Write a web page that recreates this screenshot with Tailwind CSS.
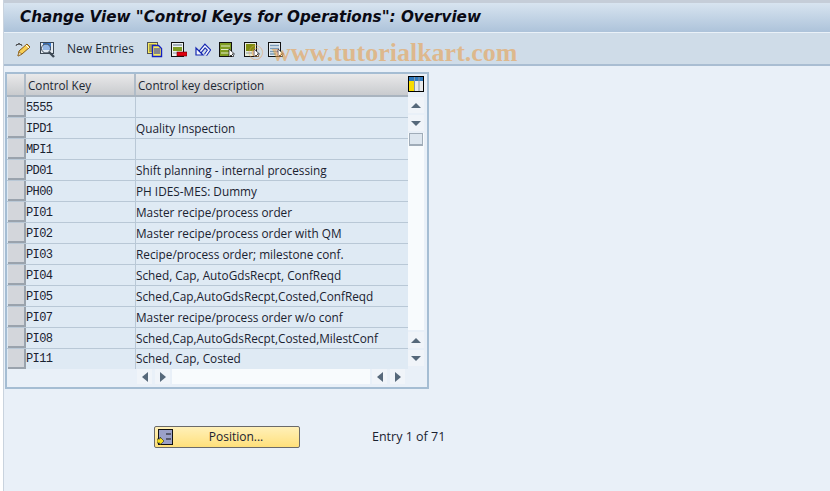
<!DOCTYPE html>
<html lang="en">
  <head>
    <meta charset="UTF-8" />
    <title>Change View</title>
    <script src="https://cdn.jsdelivr.net/npm/@tailwindcss/browser@4"></script>
  </head>
  <body class="w-[830px] h-[491px] overflow-hidden bg-white font-['Liberation_Sans',sans-serif]">
    <div class="h-[491px] ml-[3px] bg-[#e9f0f8] border-l border-[#c9d3de] flex flex-col relative">
      <div class="h-[3px] bg-[#c5cdd8]"></div>
      <div class="h-[30px] bg-gradient-to-b from-[#d8e4f0] to-[#adc3da] flex items-center pl-[16px] border-b border-[#eaf1f8]">
        <h1 class="font-['DejaVu_Sans',sans-serif] font-bold italic text-[15.2px] text-[#0a0a14]">Change View "Control Keys for Operations": Overview</h1>
      </div>
      <div class="h-[33px] bg-[#cfdce8] border-b-2 border-[#a9bdd2] flex items-center pl-[11px] pt-[1px]">
        <!-- pencil -->
        <svg width="17" height="17" viewBox="0 0 17 17" class="mr-[7px]"><path d="M1 5l1-2 1 1 1-2 1 2 1-1 1 2" fill="none" stroke="#444" stroke-width="1"/><path d="M3 15l1-5 8-7 3 3-8 7z" fill="#f7cf55" stroke="#8a5a10"/><path d="M11 4l3 3" stroke="#fff"/><path d="M3 15l1-4 3 2z" fill="#e8e0c8" stroke="#8a5a10" stroke-width=".6"/></svg>
        <!-- display -->
        <svg width="16" height="17" viewBox="0 0 16 17" class="mr-[12px]"><rect x="1.5" y="1.5" width="13" height="11" fill="#e4eaf0" stroke="#3c4854"/><rect x="4" y="2" width="8" height="7" fill="#3a7bd0"/><circle cx="7" cy="7.5" r="4.5" fill="#dce8f4" fill-opacity=".55" stroke="#3c4854"/><path d="M10 11l5 5" stroke="#3c4854" stroke-width="2.4"/></svg>
        <span class="font-['Open_Sans',sans-serif] text-[12px] text-[#1c2733] mr-[13px]">New Entries</span>
        <!-- copy -->
        <svg width="16" height="17" viewBox="0 0 16 17" class="mr-[8px]"><rect x=".5" y="1.5" width="10" height="11" fill="#f8ec5c" stroke="#555"/><path d="M2 4h7M2 6h7M2 8h7M2 10h4" stroke="#555"/><path d="M5.5 4.5h6l3 3v8h-9z" fill="#f8ec5c" stroke="#1420c0" stroke-width="1.4"/><path d="M7 8h6M7 10h6M7 12h6" stroke="#1420c0"/></svg>
        <!-- delete -->
        <svg width="16" height="17" viewBox="0 0 16 17" class="mr-[8px]"><rect x=".5" y="1.5" width="12" height="14" fill="#eef1f0" stroke="#111"/><path d="M2 4h9" stroke="#8a9aa8" stroke-width="1.5"/><rect x="2" y="6" width="9" height="4" fill="#7f9c22"/><path d="M2 12h5" stroke="#8a9aa8"/><rect x="6" y="11" width="10" height="4" fill="#e00010" stroke="#600" stroke-width=".6"/></svg>
        <!-- undo -->
        <svg width="16" height="17" viewBox="0 0 16 17" class="mr-[8px]"><path d="M5 11L10 5L14 9L10.500 14" fill="none" stroke="#1426b0" stroke-width="3.600"/><path d="M5 11L10 5L14 9L10.500 14" fill="none" stroke="#f4f7fc" stroke-width="1.500"/><path d="M1 14V7L8 14z" fill="#f4f7fc" stroke="#1426b0" stroke-width="1.200"/></svg>
        <!-- select all -->
        <svg width="16" height="17" viewBox="0 0 16 17" class="mr-[9px]"><rect x=".5" y="1.5" width="12" height="14" fill="#7f9c22" stroke="#111"/><path d="M2 5h9M2 8.500h9M2 12h9" stroke="#e4ecc8"/><path d="M10 8v8l2-2 2 2 1-1-2-2h2.500z" fill="#fff" stroke="#111" stroke-width=".7"/></svg>
        <!-- select block -->
        <svg width="16" height="17" viewBox="0 0 16 17" class="mr-[8px]"><rect x=".5" y="1.5" width="12" height="14" fill="#e8ecdc" stroke="#111"/><rect x="2" y="3" width="9" height="7" fill="#7f8c10"/><path d="M2 12h6" stroke="#8a9aa8"/><path d="M10 8v8l2-2 2 2 1-1-2-2h2.500z" fill="#fff" stroke="#111" stroke-width=".7"/></svg>
        <!-- deselect -->
        <svg width="16" height="17" viewBox="0 0 16 17"><rect x=".5" y="1.500" width="12" height="14" fill="#e6edf3" stroke="#111"/><path d="M2 4.500h9M2 7.500h9M2 10.500h9M2 13h6" stroke="#7a9ab8" stroke-width="1.300"/><path d="M10 8v8l2-2 2 2 1-1-2-2h2.500z" fill="#fff" stroke="#111" stroke-width=".7"/></svg>
      </div>

      <!-- watermark -->
      <div class="absolute left-[244px] top-[37px] flex items-center gap-[8px] font-['Liberation_Serif',serif] font-bold text-[26px] leading-[32px] text-[#e8a050]/60">
        <span class="font-normal text-[21px]">©</span>
        <span>www.tutorialkart.com</span>
      </div>

      <!-- table -->
      <div class="mt-[6px] ml-px w-[424px] h-[317px] border-2 border-[#a5bdd3] bg-[#e9f0f8] flex">
        <div class="w-[401px] flex flex-col">
          <div class="h-[21px] flex bg-gradient-to-b from-[#e9e9ea] to-[#c9cbce] text-[11.7px] font-['Open_Sans',sans-serif] text-[#1c2733]">
            <div class="w-[19px] border-r-2 border-[#b0bcc8]"></div>
            <div class="w-[110px] border-r-2 border-[#b0bcc8] pl-[2px] leading-[23px]">Control Key</div>
            <div class="flex-1 pl-[2px] leading-[23px]">Control key description</div>
          </div>
          <div class="border-t-2 border-[#a9b4bf] font-['Open_Sans',sans-serif] text-[11.8px] leading-[21px] text-[#1a2230]">
            <div class="h-[21px] flex bg-[#dfeaf4] border-b border-[#b9c8d6]"><div class="w-[18px] ml-px bg-[#d3d6db] border-r-2 border-b-2 border-[#9aa3ad]"></div><div class="w-[110px] pt-px border-r border-[#b9c8d6] font-['Liberation_Mono',monospace] text-[12px] tracking-[-0.6px]">5555</div><div class="flex-1"></div></div>
            <div class="h-[21px] flex bg-[#dfeaf4] border-b border-[#b9c8d6]"><div class="w-[18px] ml-px bg-[#d3d6db] border-r-2 border-b-2 border-[#9aa3ad]"></div><div class="w-[110px] pt-px border-r border-[#b9c8d6] font-['Liberation_Mono',monospace] text-[12px] tracking-[-0.6px]">IPD1</div><div class="flex-1">Quality Inspection</div></div>
            <div class="h-[21px] flex bg-[#dfeaf4] border-b border-[#b9c8d6]"><div class="w-[18px] ml-px bg-[#d3d6db] border-r-2 border-b-2 border-[#9aa3ad]"></div><div class="w-[110px] pt-px border-r border-[#b9c8d6] font-['Liberation_Mono',monospace] text-[12px] tracking-[-0.6px]">MPI1</div><div class="flex-1"></div></div>
            <div class="h-[21px] flex bg-[#dfeaf4] border-b border-[#b9c8d6]"><div class="w-[18px] ml-px bg-[#d3d6db] border-r-2 border-b-2 border-[#9aa3ad]"></div><div class="w-[110px] pt-px border-r border-[#b9c8d6] font-['Liberation_Mono',monospace] text-[12px] tracking-[-0.6px]">PD01</div><div class="flex-1">Shift planning - internal processing</div></div>
            <div class="h-[21px] flex bg-[#dfeaf4] border-b border-[#b9c8d6]"><div class="w-[18px] ml-px bg-[#d3d6db] border-r-2 border-b-2 border-[#9aa3ad]"></div><div class="w-[110px] pt-px border-r border-[#b9c8d6] font-['Liberation_Mono',monospace] text-[12px] tracking-[-0.6px]">PH00</div><div class="flex-1">PH IDES-MES: Dummy</div></div>
            <div class="h-[21px] flex bg-[#dfeaf4] border-b border-[#b9c8d6]"><div class="w-[18px] ml-px bg-[#d3d6db] border-r-2 border-b-2 border-[#9aa3ad]"></div><div class="w-[110px] pt-px border-r border-[#b9c8d6] font-['Liberation_Mono',monospace] text-[12px] tracking-[-0.6px]">PI01</div><div class="flex-1">Master recipe/process order</div></div>
            <div class="h-[21px] flex bg-[#dfeaf4] border-b border-[#b9c8d6]"><div class="w-[18px] ml-px bg-[#d3d6db] border-r-2 border-b-2 border-[#9aa3ad]"></div><div class="w-[110px] pt-px border-r border-[#b9c8d6] font-['Liberation_Mono',monospace] text-[12px] tracking-[-0.6px]">PI02</div><div class="flex-1">Master recipe/process order with QM</div></div>
            <div class="h-[21px] flex bg-[#dfeaf4] border-b border-[#b9c8d6]"><div class="w-[18px] ml-px bg-[#d3d6db] border-r-2 border-b-2 border-[#9aa3ad]"></div><div class="w-[110px] pt-px border-r border-[#b9c8d6] font-['Liberation_Mono',monospace] text-[12px] tracking-[-0.6px]">PI03</div><div class="flex-1">Recipe/process order; milestone conf.</div></div>
            <div class="h-[21px] flex bg-[#dfeaf4] border-b border-[#b9c8d6]"><div class="w-[18px] ml-px bg-[#d3d6db] border-r-2 border-b-2 border-[#9aa3ad]"></div><div class="w-[110px] pt-px border-r border-[#b9c8d6] font-['Liberation_Mono',monospace] text-[12px] tracking-[-0.6px]">PI04</div><div class="flex-1">Sched, Cap, AutoGdsRecpt, ConfReqd</div></div>
            <div class="h-[21px] flex bg-[#dfeaf4] border-b border-[#b9c8d6]"><div class="w-[18px] ml-px bg-[#d3d6db] border-r-2 border-b-2 border-[#9aa3ad]"></div><div class="w-[110px] pt-px border-r border-[#b9c8d6] font-['Liberation_Mono',monospace] text-[12px] tracking-[-0.6px]">PI05</div><div class="flex-1">Sched,Cap,AutoGdsRecpt,Costed,ConfReqd</div></div>
            <div class="h-[21px] flex bg-[#dfeaf4] border-b border-[#b9c8d6]"><div class="w-[18px] ml-px bg-[#d3d6db] border-r-2 border-b-2 border-[#9aa3ad]"></div><div class="w-[110px] pt-px border-r border-[#b9c8d6] font-['Liberation_Mono',monospace] text-[12px] tracking-[-0.6px]">PI07</div><div class="flex-1">Master recipe/process order w/o conf</div></div>
            <div class="h-[21px] flex bg-[#dfeaf4] border-b border-[#b9c8d6]"><div class="w-[18px] ml-px bg-[#d3d6db] border-r-2 border-b-2 border-[#9aa3ad]"></div><div class="w-[110px] pt-px border-r border-[#b9c8d6] font-['Liberation_Mono',monospace] text-[12px] tracking-[-0.6px]">PI08</div><div class="flex-1">Sched,Cap,AutoGdsRecpt,Costed,MilestConf</div></div>
            <div class="h-[20px] flex bg-[#dfeaf4] leading-[19px]"><div class="w-[18px] ml-px bg-[#d3d6db] border-r-2 border-b-2 border-[#9aa3ad]"></div><div class="w-[110px] pt-px border-r border-[#b9c8d6] font-['Liberation_Mono',monospace] text-[12px] tracking-[-0.6px]">PI11</div><div class="flex-1">Sched, Cap, Costed</div></div>
          </div>
          <div class="h-[15px] flex pl-[130px]">
            <div class="w-[15px] bg-[#f0f4f9] flex items-center justify-center"><div class="border-y-[5px] border-r-[6px] border-y-transparent border-r-[#56687a]"></div></div>
            <div class="w-[15px] ml-[3px] bg-[#f0f4f9] flex items-center justify-center"><div class="border-y-[5px] border-l-[6px] border-y-transparent border-l-[#56687a]"></div></div>
            <div class="w-[198px] ml-[2px] bg-[#f8fbfd]"></div>
            <div class="w-[15px] ml-[2px] bg-[#f0f4f9] flex items-center justify-center"><div class="border-y-[5px] border-r-[6px] border-y-transparent border-r-[#56687a]"></div></div>
            <div class="w-[15px] ml-[3px] bg-[#f0f4f9] flex items-center justify-center"><div class="border-y-[5px] border-l-[6px] border-y-transparent border-l-[#56687a]"></div></div>
          </div>
        </div>
        <div class="w-[19px] flex flex-col items-center pt-[2px] pr-[3px]">
          <!-- column config -->
          <svg width="16" height="16" viewBox="0 0 16 16"><rect x=".5" y=".5" width="15" height="15" fill="#e8eaec" stroke="#000"/><rect x="1" y="1" width="14" height="4" fill="#2f79bd"/><rect x="1" y="5" width="5" height="10" fill="#f8dc00"/><path d="M6.500 1v14M11 1v14" stroke="#8a98a6"/></svg>
          <div class="w-[16px] h-[16px] mt-[5px] bg-[#f0f4f9] flex items-center justify-center"><div class="border-x-[5px] border-b-[5px] border-x-transparent border-b-[#56687a]"></div></div>
          <div class="w-[16px] h-[16px] mt-[2px] bg-[#f0f4f9] flex items-center justify-center"><div class="border-x-[5px] border-t-[5px] border-x-transparent border-t-[#56687a]"></div></div>
          <div class="w-[16px] h-[197px] mt-[2px] bg-[#f8fbfd]"><div class="w-[14px] h-[13px] mx-auto bg-[#dde6ef] border border-[#a0acb8] border-b-2"></div></div>
          <div class="w-[16px] h-[16px] mt-[2px] bg-[#f0f4f9] flex items-center justify-center"><div class="border-x-[5px] border-b-[5px] border-x-transparent border-b-[#56687a]"></div></div>
          <div class="w-[16px] h-[16px] mt-[2px] bg-[#f0f4f9] flex items-center justify-center"><div class="border-x-[5px] border-t-[5px] border-x-transparent border-t-[#56687a]"></div></div>
        </div>
      </div>

      <div class="mt-[37px] flex items-center pl-[150px]">
        <button class="w-[146px] h-[22px] pl-[18px] rounded-[2px] border border-[#6a6a6a] bg-gradient-to-b from-[#fff0b8] to-[#ffe07a] relative font-['Open_Sans',sans-serif] text-[12px] text-[#1a2230]">
          <svg width="16" height="16" viewBox="0 0 16 16" class="absolute left-[2px] top-[2px]"><rect x="1.500" y="0.500" width="14" height="15" fill="#9aa0c8" stroke="#111"/><path d="M9 5h5M9 10h5" stroke="#111"/><path d="M0 10h3V8l4 4-4 4v-2H0z" fill="#f5e020" stroke="#222" stroke-width=".6"/></svg>
          Position...
        </button>
        <span class="ml-[72px] font-['Open_Sans',sans-serif] text-[12.5px] text-[#1a2230]">Entry 1 of 71</span>
      </div>
    </div>
  </body>
</html>
